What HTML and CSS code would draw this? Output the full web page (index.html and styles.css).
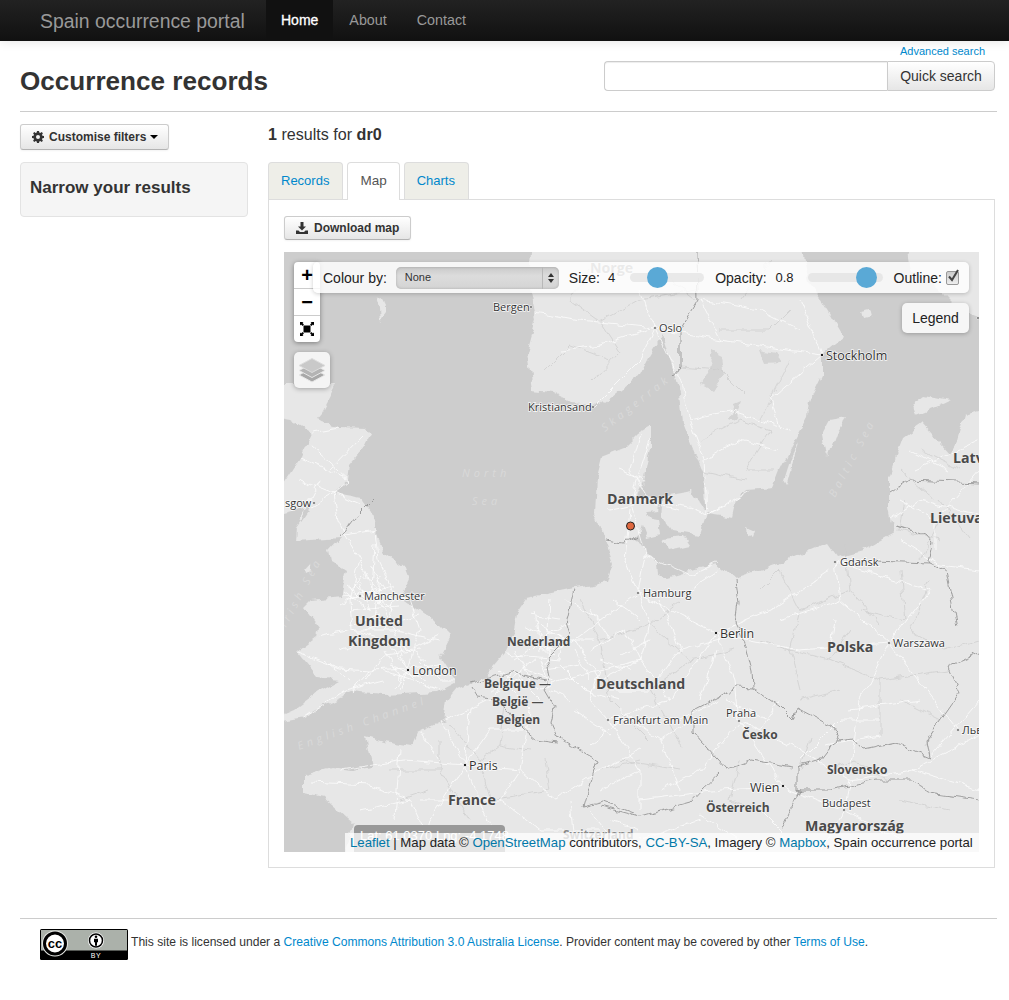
FILE: index.html
```html
<!DOCTYPE html>
<html lang="en">
<head>
    <meta charset="UTF-8">
    <title>Occurrence records | Spain occurrence portal</title>
    <link rel="stylesheet" href="styles.css">
</head>
<body>
    <nav class="navbar">
        <a class="brand" href="#">Spain occurrence portal</a>
        <ul class="nav">
            <li class="active"><a href="#">Home</a></li>
            <li><a href="#">About</a></li>
            <li><a href="#">Contact</a></li>
        </ul>
    </nav>

    <div class="container">
        <header class="page-header">
            <h1>Occurrence records</h1>
            <div class="search-box">
                <a class="advanced-link" href="#">Advanced search</a>
                <form class="input-append">
                    <input type="text" class="search-input">
                    <button type="button" class="search-btn">Quick search</button>
                </form>
            </div>
        </header>

        <div class="row">
            <aside class="sidebar">
                <button type="button" class="btn filter-btn">
                    <svg class="btn-icon" viewBox="0 0 12 12"><path d="M5 0h2l.3 1.6 1 .4L9.700 1.100l1.200 1.200-.9 1.400.4 1L12 5v2l-1.600.3-.4 1 .9 1.400-1.200 1.200-1.400-.9-1 .4L7 12H5l-.3-1.600-1-.4-1.400.9-1.200-1.200.9-1.400-.4-1L0 7V5l1.600-.3.4-1-.9-1.400 1.200-1.200 1.400.9 1-.4z M6 4a2 2 0 1 0 0 4 2 2 0 0 0 0-4z" fill-rule="evenodd"/></svg>
                    Customise filters <span class="caret"></span>
                </button>
                <div class="well">
                    <h3>Narrow your results</h3>
                </div>
            </aside>

            <main class="content">
                <p class="results-count"><b>1</b> results for <b>dr0</b></p>
                <ul class="tabs">
                    <li><a href="#">Records</a></li>
                    <li class="active"><a href="#">Map</a></li>
                    <li><a href="#">Charts</a></li>
                </ul>
                <div class="tab-panel">
                    <button type="button" class="btn download-btn">
                        <svg class="btn-icon" viewBox="0 0 12 12"><path d="M4.500 0h3v4.500H10L6 8.500 2 4.500h2.500z M0 8.500h2.500L4 10h4l1.500-1.500H12V12H0z"/></svg>
                        Download map
                    </button>

                    <div class="map">
                        <svg class="basemap" viewBox="284 252 695 600" width="695" height="600">
                            <defs>
                                <filter id="coast" x="-5%" y="-5%" width="110%" height="110%">
                                    <feTurbulence type="fractalNoise" baseFrequency="0.07" numOctaves="3" seed="4"/>
                                    <feDisplacementMap in="SourceGraphic" scale="9" xChannelSelector="R" yChannelSelector="G"/>
                                </filter>
                                <filter id="wiggle" x="-5%" y="-5%" width="110%" height="110%">
                                    <feTurbulence type="fractalNoise" baseFrequency="0.09" numOctaves="2" seed="11"/>
                                    <feDisplacementMap in="SourceGraphic" scale="8" xChannelSelector="G" yChannelSelector="R"/>
                                </filter>
                            </defs>
                            <!-- land -->
                            <g class="land" filter="url(#coast)">
                                <path d="M260 385L337 385 322 414 317 420 339 427 366 428 370 435 364 447 351 463 349 480 334 493 361 498 372 513 379 540 384 553 404 567 409 580 401 597 434 620 451 637 441 657 454 677 454 683 437 692 384 695 351 692 327 703 304 717 260 725 294 710 317 693 341 680 317 677 297 652 317 637 319 627 304 607 311 600 341 597 347 570 331 560 329 550 341 537 296 540 297 527 311 507 260 520 284 483 301 457 312 433 291 420 260 414Z"/>
                                <path d="M340 875L354 823 324 797 304 793 304 775 331 767 351 770 374 767 367 737 384 742 411 747 417 733 444 720 447 700 457 688 484 677 504 653 514 630 517 613 527 598 574 588 594 585 607 582 613 563 602 533 595 513 597 477 602 457 625 448 640 433 650 427 650 447 643 483 636 498 660 497 658 512 647 513 640 533 632 540 647 550 657 563 658 575 667 578 693 570 717 563 735 578 780 563 827 543 837 557 863 550 893 533 888 507 888 477 903 437 923 423 950 453 958 440 965 415 1000 405 1000 875Z"/>
                                <path d="M533 235L530 283 537 317 527 353 533 390 552 392 570 402 600 405 640 375 650 355 662 335 668 355 674 372 680 395 683 423 703 473 707 513 733 517 737 500 747 490 773 488 780 470 790 450 808 417 810 400 822 375 822 355 843 337 827 310 810 283 800 235Z"/>
                                <path d="M905 235L910 270 940 290 960 310 1000 325 1000 235Z"/>
                                <path d="M664 497L692 492 707 513 700 535 672 530 662 515Z"/>
                                <path d="M640 517L658 520 660 535 648 538Z"/>
                                <path d="M662 538L684 536 690 545 668 550Z"/>
                                <path d="M823 433L830 420 847 417 835 435 827 457Z"/>
                                <path d="M798 442L787 485 784 480 792 455Z"/>
                                <path d="M746 527L755 531 753 537 747 533Z"/>
                                <path d="M915 415L935 407 950 400 925 395 912 405Z"/>
                                <path d="M376 298L382 297 386 312 380 320 379 308Z"/>
                                <path d="M270 392L297 396 290 400 270 400Z"/>
                                <path d="M304 570L310 563 311 571 305 574Z"/>
                                <path d="M862 310L870 308 872 316 864 318Z"/>
                            </g>
                            <!-- darker inland lakes -->
                            <g class="lake" filter="url(#coast)">
                                <path d="M712 350L722 355 725 375 712 392 700 385 708 370Z"/>
                                <path d="M760 350L775 353 782 362 765 363Z"/>
                                <path d="M735 405L742 402 736 420 731 418Z"/>
                            </g>
                            <g filter="url(#wiggle)">
                                <!-- regional boundaries -->
                                <g class="regions">
                                    <path d="M593 380L620 352 600 322 640 300 697 290M697 300L650 265M680 367L720 370 745 395M720 330L770 330 790 310M740 300L770 260M790 360L760 420M700 440L740 420 770 430 745 470 775 470M700 470L745 480M610 360L570 345 545 370M570 300L600 322M590 270L570 300"/>
                                    <path d="M780 570L800 610 790 650 800 690M800 610L850 590 880 625M790 650L830 660 850 630M830 660L880 680 880 735M880 680L948 670M840 690L800 700M930 580L910 630 945 650M860 610L905 620M760 640L790 650M760 590L780 570M850 590L845 545M905 620L900 570M945 650L979 640M900 700L940 720 925 745"/>
                                    <path d="M450 725L480 760 500 745 530 750M480 760L490 800 550 790M390 770L440 770 470 820M440 770L440 740M550 790L545 760M600 640L610 700 650 740M650 690L680 745M620 760L680 770M830 770L855 760 890 780M740 760L730 800 760 810M900 800L950 810M400 800L430 790M500 745L505 705M580 600L600 640 650 625M680 600L650 625 690 660 735 650M690 660L650 690M600 770L640 760M810 740L800 770"/>
                                    <path d="M905 500L900 530 940 540M940 500L970 540M920 560L940 520M920 450L960 470M900 470L935 500"/>
                                </g>
                                <!-- roads -->
                                <g class="roads">
                                    <path d="M312 433L340 428M301 457L330 470 349 480 334 493 360 505M311 507L334 493 338 520 345 535 360 560 372 590 385 610 408 668M330 470L362 437M345 535L375 530 378 560 392 590M360 560L350 600 352 630 385 640 408 668M341 597L375 595 410 600 420 630 408 668 440 665M317 637L352 630 392 630 440 640M351 692L370 670 408 668 395 690M297 652L340 668 370 670M304 717L345 690 384 680M300 480L334 493M310 445L349 480M300 520L320 480"/>
                                    <path d="M350 590L362 575 380 590 365 600 345 585M345 600L395 585M350 610L400 605M360 580L370 610M380 575L375 620M395 600L385 630M355 620L400 620M365 630L420 615M375 640L410 650 440 635M420 650L385 655 365 680M390 665L425 680M408 668L400 690M345 592L372 612M352 582L395 610M340 605L365 590M370 565L385 590M375 545L372 590M350 625L380 615M395 640L425 660M400 655L415 680M385 650L400 680M420 660L440 680 454 680M380 670L440 690M340 650L370 640M325 660L350 680"/>
                                    <path d="M311 782L370 785 410 800 424 830M340 770L405 760 465 765 440 720M465 765L520 770 557 800M465 765L470 710 490 700 511 672M465 765L430 820 424 852M465 765L500 850M400 750L395 820M520 770L530 710 511 690M557 800L600 770 640 750M470 710L440 722M420 800L500 800 540 830M360 810L410 800M440 760L420 730M465 765L490 730 530 730M500 800L520 770M570 800L575 850M540 830L600 830M590 810L620 850M610 820L640 830"/>
                                    <path d="M515 660L530 650 548 632 570 622M520 640L560 650M525 625L550 640 545 665M535 610L540 650M550 600L548 632 570 640M525 670L555 680M511 672L540 690 560 680 600 670M505 655L560 660M515 650L530 680M540 660L550 685M490 690L520 680 540 700M510 680L535 660M500 670L525 690M530 615L560 620M540 625L565 640 560 660M530 640L555 655M545 670L580 665M555 640L595 640M550 690L570 700M560 665L585 690M575 650L590 680"/>
                                    <path d="M560 650L600 620 638 593 645 555 630 500 650 440M600 620L565 600M638 593L716 633M600 670L590 700 608 720 640 770 640 810M608 720L670 700 716 633M670 700L640 660 600 670M640 660L650 625 638 593M575 640L600 680 640 660M590 650L625 630 640 660M600 660L630 670M610 690L650 690M620 710L660 740 690 720M650 690L680 650 720 640M680 650L660 600M690 590L720 570M716 633L770 610 830 570M716 633L735 680 739 721M716 650L700 700M739 721L700 770 660 790M739 721L790 745 850 780 844 810M739 721L783 787 844 810M783 787L720 790 640 800M575 710L610 735M585 690L620 700M590 745L620 720M600 790L640 770M660 740L680 790M615 600L640 620M610 640L590 610M620 655L650 640M680 720L720 700M725 700L770 720M760 730L780 700"/>
                                    <path d="M593 407L640 360 655 328M655 328L600 345 560 350M655 328L680 380 690 420 705 460M655 328L720 340 822 355M822 355L770 400 780 430M705 460L708 515 730 500M708 515L750 490M705 460L740 440 778 450M690 420L730 410 790 430M720 340L700 300M535 312L580 320 655 328M640 433L630 470 650 500 690 507 708 515M640 500L680 510M630 510L625 560 638 593M645 555L690 575 717 563M655 328L640 290M800 330L760 310 700 300M822 355L800 300M620 470L645 480M610 510L635 505"/>
                                    <path d="M835 562L840 600 889 643 860 700 850 770M889 643L958 730M835 562L930 590 889 643M889 643L800 650 716 633M840 600L780 620M850 710L920 700M835 620L830 650M890 520L920 500 979 515M900 540L940 565 979 570M900 500L935 520 935 550M936 520L979 470M915 470L979 440M910 450L950 470"/>
                                    <path d="M850 780L913 770 979 790M844 810L900 840M844 810L820 850M913 770L979 735M930 757L979 700M800 760L840 720 880 720M825 745L880 735M700 815L740 840M760 810L800 850M640 840L700 820"/>
                                </g>
                                <!-- country borders -->
                                <g class="borders">
                                    <path d="M372 500L359 513 341 537"/>
                                    <path d="M697 253L698 300 680 330 680 367 673 375"/>
                                    <path d="M607 540L623 543 638 537"/>
                                    <path d="M574 588L567 620 571 633 547 657 551 677 544 690 554 707 551 723 557 737 597 760 584 807 604 802 634 813"/>
                                    <path d="M471 683L511 672 531 677 547 680M471 687L477 697 501 700 517 723 537 740 557 743"/>
                                    <path d="M735 580L738 603 735 623 745 643 752 670 753 688 737 687 693 710 693 733 727 770 753 760 793 767"/>
                                    <path d="M720 773L702 790 690 803 640 817 600 806"/>
                                    <path d="M753 688L780 707 793 720 797 708 833 727 840 740 830 747 820 760 797 767 797 790 800 790 783 827"/>
                                    <path d="M840 740L853 738 863 750 897 743 930 757 927 740 960 693 948 667 979 653"/>
                                    <path d="M797 790L830 790 877 780 913 780 930 793 979 800"/>
                                    <path d="M875 561L930 563 928 560 932 543 925 535 897 526M930 563L945 570 957 627"/>
                                    <path d="M890 493L910 480 979 483"/>
                                </g>
                            </g>
                            <!-- sea names -->
                            <g class="sea-names">
                                <text x="462" y="477">North</text>
                                <text x="472" y="505">Sea</text>
                                <text transform="translate(835 498) rotate(-62)">Baltic Sea</text>
                                <text transform="translate(299 750) rotate(-20)">English Channel</text>
                                <text transform="translate(286 628) rotate(-62)">Irish Sea</text>
                                <text transform="translate(605 432) rotate(-38)">Skagerrak</text>
                            </g>
                            <!-- place names -->
                            <g class="country">
                                <text class="faint" x="590" y="273">Norge</text>
                                <text x="607" y="504">Danmark</text>
                                <text x="355" y="626">United</text>
                                <text x="348" y="646">Kingdom</text>
                                <text x="596" y="689">Deutschland</text>
                                <text x="827" y="652">Polska</text>
                                <text x="448" y="805">France</text>
                                <text x="805" y="831">Magyarország</text>
                                <text x="953" y="463">Latvija</text>
                                <text x="930" y="523">Lietuva</text>
                            </g>
                            <g class="country-sm">
                                <text x="507" y="646">Nederland</text>
                                <text x="484" y="688">Belgique —</text>
                                <text x="492" y="706">België —</text>
                                <text x="496" y="724">Belgien</text>
                                <text x="742" y="739">Česko</text>
                                <text x="827" y="774">Slovensko</text>
                                <text x="706" y="812">Österreich</text>
                                <text class="faint" x="563" y="839">Switzerland</text>
                            </g>
                            <g class="city">
                                <text x="493" y="311">Bergen</text>
                                <text x="659" y="332">Oslo</text>
                                <text class="big" x="826" y="360">Stockholm</text>
                                <text x="528" y="411">Kristiansand</text>
                                <text x="285" y="507">sgow</text>
                                <text x="364" y="600">Manchester</text>
                                <text class="big" x="412" y="675">London</text>
                                <text x="643" y="597">Hamburg</text>
                                <text class="big" x="720" y="638">Berlin</text>
                                <text x="893" y="647">Warszawa</text>
                                <text x="840" y="566">Gdańsk</text>
                                <text x="613" y="724">Frankfurt am Main</text>
                                <text x="726" y="717">Praha</text>
                                <text class="big" x="469" y="770">Paris</text>
                                <text class="big" x="750" y="792">Wien</text>
                                <text x="822" y="807">Budapest</text>
                                <text x="962" y="734">Львів</text>
                            </g>
                            <g class="city-dots">
                                <circle cx="531" cy="307" r="1.300"/><circle cx="655" cy="328" r="1.300"/>
                                <circle cx="822" cy="355" r="1.700"/><circle cx="593" cy="407" r="1.300"/>
                                <circle cx="314" cy="503" r="1.300"/><circle cx="360" cy="596" r="1.300"/>
                                <circle cx="408" cy="670" r="1.700"/><circle cx="638" cy="593" r="1.300"/>
                                <circle cx="716" cy="633" r="1.700"/><circle cx="889" cy="643" r="1.300"/>
                                <circle cx="835" cy="562" r="1.300"/><circle cx="608" cy="720" r="1.300"/>
                                <circle cx="739" cy="721" r="1.300"/><circle cx="465" cy="765" r="1.700"/>
                                <circle cx="783" cy="786" r="1.700"/><circle cx="844" cy="810" r="1.300"/>
                                <circle cx="958" cy="730" r="1.300"/><circle cx="978" cy="318" r="1.300"/>
                            </g>
                            <circle class="occurrence" cx="630.500" cy="526" r="4"/>
                        </svg>

                        <div class="zoom-control">
                            <a class="zoom-btn">+</a>
                            <a class="zoom-btn">−</a>
                            <a class="zoom-btn">
                                <svg width="16" height="16" viewBox="0 0 16 16"><path d="M4 4h8v8H4z M0 0h4L2.800 1.200 4.500 2.900 2.900 4.500 1.200 2.800 0 4z M16 0v4l-1.200-1.200-1.700 1.700-1.600-1.600 1.700-1.700L12 0z M0 16v-4l1.200 1.200 1.700-1.700 1.600 1.600-1.700 1.700L4 16z M16 16h-4l1.200-1.200-1.700-1.700 1.600-1.600 1.700 1.700L16 12z"/></svg>
                            </a>
                        </div>
                        <div class="layers-control">
                            <svg width="30" height="30" viewBox="0 0 30 30"><path class="layer-low" d="M15 13l13 7-13 7-13-7z"/><path class="layer-mid" d="M15 8.500l13 7-13 7-13-7z"/><path class="layer-top" d="M15 3.500l13 7-13 7-13-7z"/></svg>
                        </div>

                        <div class="map-bar">
                            <label class="bar-label">Colour by:</label>
                            <div class="select-wrap">
                                <select class="colour-select"><option>None</option></select>
                                <span class="select-arrows"></span>
                            </div>
                            <label class="bar-label size-label">Size:</label>
                            <span class="bar-value size-value">4</span>
                            <div class="slider size-slider"><span class="thumb"></span></div>
                            <label class="bar-label opacity-label">Opacity:</label>
                            <span class="bar-value opacity-value">0.8</span>
                            <div class="slider opacity-slider"><span class="thumb"></span></div>
                            <label class="bar-label outline-label">Outline:</label>
                            <span class="check-box">
                                <svg width="14" height="15" viewBox="0 0 14 15"><path d="M3 7.500l3 3.500 6-10" fill="none" stroke="#444" stroke-width="2"/></svg>
                            </span>
                        </div>
                        <button type="button" class="legend-btn">Legend</button>

                        <div class="coords">Lat: 61.0370 Lng: -4.1748</div>
                        <div class="attribution"><a href="#">Leaflet</a> | Map data © <a href="#">OpenStreetMap</a> contributors, <a href="#">CC-BY-SA</a>, Imagery © <a href="#">Mapbox</a>, Spain occurrence portal</div>
                    </div>
                </div>
            </main>
        </div>

        <footer class="site-footer">
            <svg class="cc-badge" width="88" height="31" viewBox="0 0 88 31">
                <rect width="88" height="31" rx="1.500" fill="#000"/>
                <rect x="1" y="1" width="86" height="20.500" fill="#abb1aa"/>
                <circle cx="15" cy="14.500" r="13" fill="#e4e6e3"/>
                <circle cx="15" cy="14.500" r="10.500" fill="#fff" stroke="#000" stroke-width="3"/>
                <text class="cc-text" x="15" y="18.500">cc</text>
                <circle cx="56" cy="11.500" r="8" fill="#fff"/>
                <circle cx="56" cy="11.500" r="6.500" fill="none" stroke="#000" stroke-width="1.500"/>
                <circle cx="56" cy="7.800" r="1.300" fill="#000"/>
                <path d="M54 9.800h4v3.500h-1v3.500h-2v-3.500h-1z" fill="#000"/>
                <text class="by-text" x="56" y="29">BY</text>
            </svg>
            <p>This site is licensed under a <a href="#">Creative Commons Attribution 3.0 Australia License</a>. Provider content may be covered by other <a href="#">Terms of Use</a>.</p>
        </footer>
    </div>
</body>
</html>
```

FILE: styles.css
```css
body {
    margin: 0;
    font-family: "Liberation Sans", Arial, sans-serif;
    font-size: 14px;
    color: #333;
    background: #fff;
}

a {
    color: #0088cc;
    text-decoration: none;
}

/* top bar */
.navbar {
    display: flex;
    height: 40px;
    padding-left: 40px;
    background: linear-gradient(#222, #111);
    box-shadow: 0 1px 10px rgba(0, 0, 0, 0.1);
    border-bottom: 1px solid #111;
}

.brand {
    width: 226px;
    font-size: 19.400px;
    line-height: 43px;
    color: #999;
}

.nav {
    display: flex;
    margin: 0;
    padding: 0;
    list-style: none;
}

.nav a {
    display: block;
    padding: 0 15px;
    font-size: 14.300px;
    line-height: 40px;
    color: #999;
}

.nav .active {
    margin-right: 1px;
}

.nav .active a {
    color: #fff;
    font-size: 14px;
    background: #111;
    -webkit-text-stroke: 0.3px #fff;
}

.container {
    margin: 0 14px 0 20px;
}

/* heading */
.page-header {
    display: flex;
    justify-content: space-between;
    height: 70px;
    margin-right: -2px;
    padding-right: 2px;
    border-bottom: 1px solid #ccc;
}

.page-header h1 {
    margin: 0;
    font-size: 26.100px;
    line-height: 80px;
    color: #333;
}

.search-box {
    display: flex;
    flex-direction: column;
    align-items: flex-end;
    padding-top: 4px;
}

.advanced-link {
    margin-right: 10px;
    font-size: 11px;
    line-height: 13px;
    height: 16px;
}

.input-append {
    display: flex;
    margin: 0;
}

.search-input {
    box-sizing: border-box;
    width: 283px;
    height: 30px;
    padding: 4px 6px;
    border: 1px solid #ccc;
    border-right: 0;
    border-radius: 4px 0 0 4px;
    box-shadow: inset 0 1px 1px rgba(0, 0, 0, 0.075);
}

.search-btn {
    box-sizing: border-box;
    width: 108px;
    height: 30px;
    padding: 0;
    font: 14px "Liberation Sans", Arial, sans-serif;
    color: #333;
    background: linear-gradient(#fff, #e6e6e6);
    border: 1px solid #ccc;
    border-radius: 0 4px 4px 0;
}

/* layout */
.row {
    display: flex;
    gap: 20px;
    padding-top: 12px;
}

.sidebar {
    flex: 0 0 228px;
}

.content {
    flex: 1;
    min-width: 0;
}

.btn {
    display: flex;
    align-items: center;
    box-sizing: border-box;
    padding: 0;
    font: bold 12px "Liberation Sans", Arial, sans-serif;
    color: #333;
    background: linear-gradient(#fff, #e6e6e6);
    border: 1px solid #ccc;
    border-bottom-color: #b3b3b3;
    border-radius: 3px;
    box-shadow: inset 0 1px 0 rgba(255, 255, 255, 0.2), 0 1px 2px rgba(0, 0, 0, 0.05);
}

.btn-icon {
    width: 12px;
    height: 12px;
    margin-right: 6px;
    fill: #333;
}

.filter-btn {
    width: 149px;
    height: 26px;
    padding-left: 11px;
}

.filter-btn .btn-icon {
    margin-right: 5px;
}

.caret {
    display: inline-block;
    width: 0;
    height: 0;
    margin-left: 4px;
    border-top: 4px solid #000;
    border-left: 4px solid transparent;
    border-right: 4px solid transparent;
}

.well {
    box-sizing: border-box;
    height: 55px;
    margin-top: 12px;
    padding: 15px 9px;
    background: #f5f5f5;
    border: 1px solid #e3e3e3;
    border-radius: 4px;
}

.well h3 {
    margin: 0;
    font-size: 17px;
    line-height: 20px;
}

.results-count {
    margin: 0;
    height: 38px;
    font-size: 16.100px;
    line-height: 21px;
}

/* tabs */
.tabs {
    display: flex;
    gap: 4px;
    height: 37px;
    margin: 0;
    padding: 0;
    list-style: none;
}

.tabs a {
    display: block;
    box-sizing: border-box;
    height: 37px;
    padding: 0 13px 0 12px;
    font-size: 13px;
    line-height: 36px;
    background: #eeeee8;
    border: 1px solid #ddd;
    border-bottom: 0;
    border-radius: 4px 4px 0 0;
}

.tabs .active a {
    position: relative;
    height: 38px;
    padding: 0 12px;
    color: #555;
    font-size: 13.500px;
    background: #fff;
}

.tab-panel {
    box-sizing: border-box;
    height: 669px;
    padding: 16px 15px 0;
    border: 1px solid #ddd;
}

.download-btn {
    width: 127px;
    height: 24px;
    padding-left: 11px;
}

/* map */
.map {
    position: relative;
    width: 695px;
    height: 600px;
    margin-top: 12px;
    overflow: hidden;
    background: #cdcdcd;
}

.basemap {
    display: block;
}

.land path {
    fill: #e7e7e7;
}

.lake path {
    fill: #d4d4d4;
}

.roads path {
    fill: none;
    stroke: #fff;
    stroke-width: 0.8;
    opacity: 0.9;
}

.regions path {
    fill: none;
    stroke: #cbcbcb;
    stroke-width: 0.7;
}

.borders path {
    fill: none;
    stroke: #8c8c8c;
    stroke-width: 0.8;
}

.sea-names text {
    font: italic 11px "Open Sans", sans-serif;
    letter-spacing: 4px;
    fill: #d9d9d9;
}

.country text,
.country-sm text,
.city text {
    font-family: "Open Sans", sans-serif;
    paint-order: stroke;
    stroke: rgba(255, 255, 255, 0.3);
    stroke-width: 1.500px;
}

.country text {
    font-size: 14.200px;
    font-weight: 700;
    fill: #4a4a4a;
}

.country-sm text {
    font-size: 12px;
    font-weight: 700;
    fill: #4a4a4a;
}

.country .faint,
.country-sm .faint {
    fill: #8a8a8a;
}

.city text {
    font-size: 11px;
    fill: #333;
    stroke: rgba(255, 255, 255, 0.85);
}

.city .big {
    font-size: 12.500px;
}

.city-dots circle {
    fill: #222;
    stroke: #fff;
    stroke-width: 0.8;
}

.occurrence {
    fill: #e0683f;
    stroke: #222;
    stroke-width: 1;
}

.zoom-control {
    position: absolute;
    top: 10px;
    left: 10px;
    width: 26px;
    background: #fff;
    border-radius: 4px;
    box-shadow: 0 1px 5px rgba(0, 0, 0, 0.4);
}

.zoom-btn {
    display: flex;
    align-items: center;
    justify-content: center;
    height: 26px;
    font: bold 20px "Liberation Sans", Arial, sans-serif;
    color: #000;
    border-bottom: 1px solid #ccc;
}

.zoom-btn:last-child {
    border-bottom: 0;
}

.zoom-btn svg {
    width: 14px;
    height: 14px;
}

.layers-control {
    position: absolute;
    top: 100px;
    left: 10px;
    display: flex;
    align-items: center;
    justify-content: center;
    width: 36px;
    height: 36px;
    background: #f4f4f4;
    border-radius: 5px;
    box-shadow: 0 1px 5px rgba(0, 0, 0, 0.3);
}

.layer-top {
    fill: #c9c9c9;
    stroke: #ddd;
}

.layer-mid {
    fill: #b4b4b4;
    stroke: #e8e8e8;
}

.layer-low {
    fill: #a8a8a8;
    stroke: #e8e8e8;
}

.map-bar {
    position: absolute;
    top: 10px;
    left: 29px;
    display: flex;
    align-items: center;
    box-sizing: border-box;
    width: 656px;
    height: 31px;
    padding-left: 10px;
    background: rgba(255, 255, 255, 0.82);
    border-radius: 5px;
    box-shadow: 0 1px 4px rgba(0, 0, 0, 0.2);
    color: #222;
}

.select-wrap {
    position: relative;
    width: 163px;
    height: 22px;
    margin-left: 9px;
}

.colour-select {
    box-sizing: border-box;
    width: 100%;
    height: 22px;
    padding: 0 9px 2px;
    appearance: none;
    font: 11px "Liberation Sans", Arial, sans-serif;
    color: #333;
    background: linear-gradient(#c9c9c9, #dcdcdc 40%, #d4d4d4);
    border: 0;
    border-radius: 5px;
    box-shadow: inset 0 0 3px rgba(0, 0, 0, 0.2);
}

.select-arrows {
    position: absolute;
    top: 0;
    right: 0;
    width: 16px;
    height: 22px;
    border-left: 1px solid #b8b8b8;
}

.select-arrows::before,
.select-arrows::after {
    content: "";
    position: absolute;
    left: 5px;
    border-left: 3px solid transparent;
    border-right: 3px solid transparent;
}

.select-arrows::before {
    top: 6px;
    border-bottom: 4px solid #333;
}

.select-arrows::after {
    top: 12px;
    border-top: 4px solid #333;
}

.size-label {
    margin-left: 10px;
}

.bar-value {
    margin-left: 8px;
    font-size: 13px;
}

.slider {
    position: relative;
    width: 74px;
    height: 9px;
    background: rgba(225, 225, 225, 0.7);
    border-radius: 5px;
}

.thumb {
    position: absolute;
    top: -6px;
    width: 21px;
    height: 21px;
    background: #5aa9d6;
    border-radius: 50%;
}

.size-slider {
    margin-left: 15px;
}

.size-slider .thumb {
    left: 17px;
}

.opacity-label {
    margin-left: 11px;
}

.opacity-value {
    margin-left: 9px;
}

.opacity-slider {
    margin-left: 14px;
    width: 75px;
}

.opacity-slider .thumb {
    left: 48px;
}

.outline-label {
    margin-left: 11px;
}

.check-box {
    display: block;
    box-sizing: border-box;
    width: 13px;
    height: 14px;
    margin-left: 4px;
    background: linear-gradient(#ccc, #eee);
    border: 1px solid #999;
    border-radius: 2px;
}

.check-box svg {
    display: block;
    margin: -3px 0 0 -1px;
}

.legend-btn {
    position: absolute;
    top: 51px;
    right: 10px;
    width: 67px;
    height: 30px;
    padding: 0;
    font: 14px "Liberation Sans", Arial, sans-serif;
    color: #222;
    background: #f6f6f6;
    border: 0;
    border-radius: 5px;
    box-shadow: 0 1px 4px rgba(0, 0, 0, 0.25);
}

.coords {
    position: absolute;
    left: 70px;
    bottom: 0;
    box-sizing: border-box;
    width: 151px;
    height: 27px;
    padding: 3px 0 0 6px;
    font-size: 13px;
    white-space: nowrap;
    color: #fff;
    background: #999;
    border-radius: 4px 4px 0 0;
}

.attribution {
    position: absolute;
    right: 0;
    bottom: 0;
    box-sizing: border-box;
    width: 634px;
    height: 19px;
    padding-left: 5px;
    font-size: 13.200px;
    line-height: 19px;
    white-space: nowrap;
    color: #222;
    background: rgba(255, 255, 255, 0.75);
}

.attribution a {
    color: #0078a8;
}

/* footer */
.site-footer {
    display: flex;
    align-items: center;
    margin: 50px -2px 0 0;
    padding: 10px 0 20px 20px;
    border-top: 1px solid #ccc;
}

.site-footer p {
    margin: 0 0 5px 3px;
    font-size: 12.100px;
    white-space: nowrap;
}

.cc-badge {
    display: block;
    flex: none;
}

.cc-text {
    font: bold 13px "Liberation Sans", Arial, sans-serif;
    text-anchor: middle;
    fill: #000;
}

.by-text {
    font: 7px "Liberation Sans", Arial, sans-serif;
    letter-spacing: 0.5px;
    text-anchor: middle;
    fill: #fff;
}
```
